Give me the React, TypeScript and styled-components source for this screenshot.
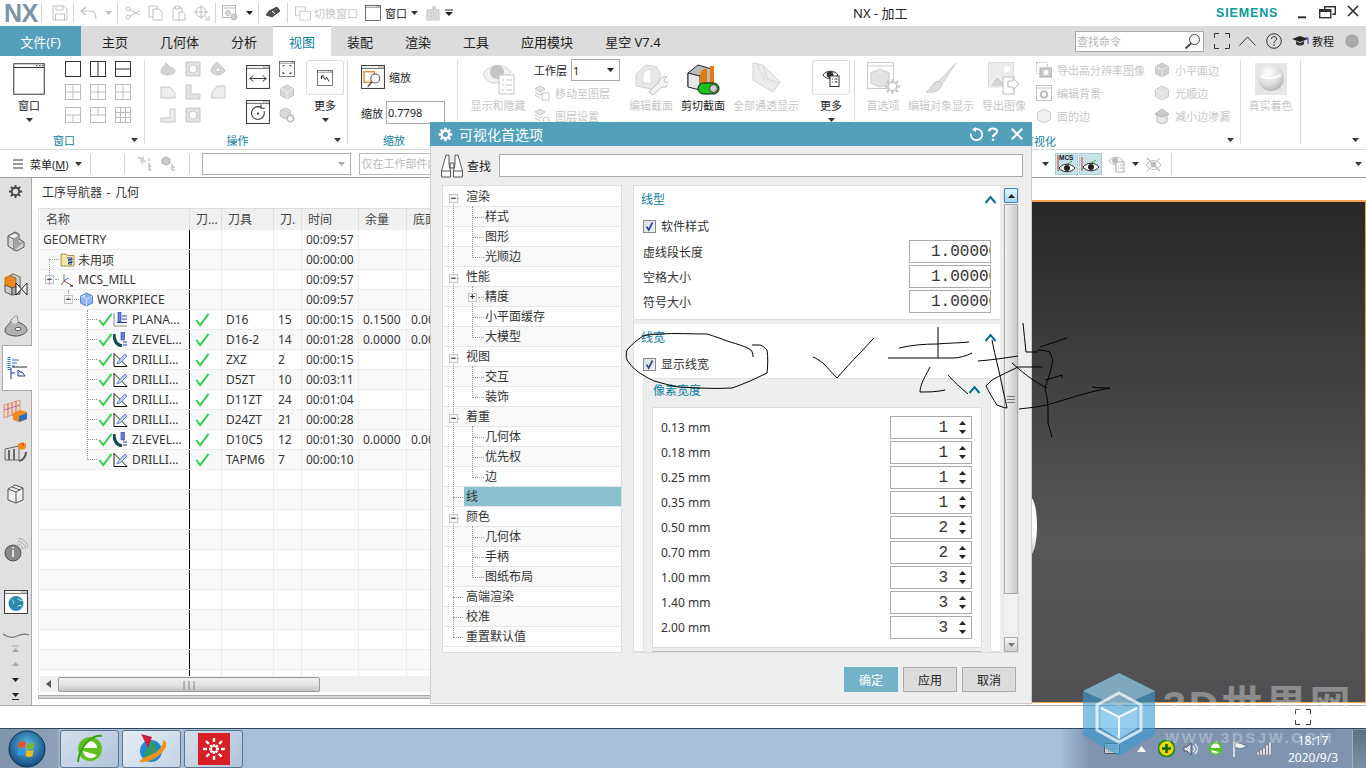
import React from "react";
import styled, { createGlobalStyle } from "styled-components";

const Global = createGlobalStyle`
  html, body { margin: 0; padding: 0; width: 1366px; height: 768px; overflow: hidden; background: #fff; }
  * { box-sizing: border-box; }
  body { font-family: "Noto Sans", "Noto Sans CJK SC", sans-serif; font-size: 12px; color: #333; }
  svg { display: block; flex: none; }
`;

const Page = styled.div`position: relative; width: 1366px; height: 768px; overflow: hidden; display: flex; flex-direction: column;`;

/* ---------- title bar ---------- */
const TitleBar = styled.div`height: 26px; display: flex; align-items: center; background: #fff; position: relative; font-size: 11px;`;
const Logo = styled.div`font: bold 25px "Liberation Sans", sans-serif; color: #7d93a9; width: 37px; margin-left: 4px; letter-spacing: -0.5px;`;
const Slot = styled.div<{ $w?: number; $ml?: number }>`
  display: flex; align-items: center; justify-content: center; flex: none;
  width: ${p => (p.$w ? `${p.$w}px` : "auto")}; margin-left: ${p => p.$ml ?? 0}px;
`;
const VSep = styled.div<{ $ml?: number; $h?: number }>`width: 1px; height: ${p => p.$h ?? 20}px; background: #d4d4d4; margin-left: ${p => p.$ml ?? 0}px; flex: none;`;
const DimText = styled.span`color: #c6c6c6; white-space: nowrap;`;
const DarkText = styled.span`color: #222; white-space: nowrap;`;
const AppTitle = styled.div`position: absolute; left: 853px; top: 3px; font-size: 13px; color: #222; white-space: nowrap;`;
const Siemens = styled.div`position: absolute; left: 1216px; top: 6px; font: bold 12.5px "Liberation Sans", sans-serif; color: #0a9b9b; letter-spacing: 0.85px;`;
const WinControls = styled.svg`position: absolute; left: 1296px; top: 5px;`;

/* ---------- tabs ---------- */
const TabBar = styled.div`height: 30px; background: #dcdcdc; display: flex; align-items: stretch; position: relative;`;
const FileTab = styled.div`width: 81px; margin-right: 5px; background: #53a0ba; color: #fff; font-size: 13px; display: flex; align-items: center; justify-content: center;`;
const Tab = styled.div<{ $active?: boolean }>`
  padding: 0 16px; font-size: 13px; display: flex; align-items: center; white-space: nowrap;
  color: ${p => (p.$active ? "#0b7ea4" : "#222")}; background: ${p => (p.$active ? "#fff" : "transparent")};
  ${p => p.$active && "border-top: 1px solid #aaa;"}
`;
const TabRight = styled.div`position: absolute; left: 1075px; top: 5px; height: 20px; display: flex; align-items: center; font-size: 11px;`;
const CmdSearch = styled.div`width: 129px; height: 21px; background: #fff; border: 1px solid #aaa; display: flex; align-items: center; justify-content: space-between; padding: 0 2px 0 1px; color: #b4b4b4;`;

/* ---------- ribbon ---------- */
const Ribbon = styled.div`height: 94px; display: flex; border-bottom: 1px solid #ddd; background: #fff; font-size: 11px;`;
const Group = styled.div<{ $w?: number; $bar?: boolean }>`
  position: relative; flex: ${p => (p.$w ? "none" : "1")}; width: ${p => (p.$w ? `${p.$w}px` : "auto")}; padding-top: 4px; display: flex; flex-direction: column;
  ${p => p.$bar && `&::after { content: ""; position: absolute; right: 0; top: 4px; bottom: 5px; width: 1px; background: #dcdcdc; }`}
`;
const GroupBody = styled.div`height: 70px; display: flex; align-items: flex-start;`;
const GroupLabel = styled.div<{ $pr?: number; $end?: boolean }>`
  height: 20px; padding-top: 2px; display: flex; align-items: center; justify-content: ${p => (p.$end ? "flex-end" : "center")};
  color: #0b7ea4; padding-right: ${p => p.$pr ?? 0}px;
`;
const GroupCaret = styled.div`position: absolute; right: 7px; bottom: 7px;`;
const Big = styled.div<{ $w: number; $ml?: number; $dim?: boolean }>`
  width: ${p => p.$w}px; margin-left: ${p => p.$ml ?? 0}px; flex: none; display: flex; flex-direction: column; align-items: center;
  color: ${p => (p.$dim ? "#c6c6c6" : "#222")};
`;
const BigIcon = styled.div`height: 37px; display: flex; align-items: center; justify-content: center;`;
const BigLabel = styled.div`height: 17px; line-height: 17px; white-space: nowrap;`;
const BigCaret = styled.div`height: 12px; display: flex; align-items: center;`;
const MoreBox = styled.div`width: 38px; height: 35px; margin-bottom: 2px; border: 1px solid #dcdcdc; border-radius: 3px; display: flex; align-items: center; justify-content: center;`;
const IconGrid = styled.div<{ $ml: number }>`
  margin-left: ${p => p.$ml}px; margin-top: 1px; display: grid; grid-template-columns: repeat(3, 16px); grid-auto-rows: 16px; column-gap: 9px; row-gap: 7px; flex: none;
`;
const Stack = styled.div<{ $ml?: number; $w?: number; $pt?: number; $gap?: number; $mt?: number }>`
  margin-left: ${p => p.$ml ?? 0}px; margin-top: ${p => p.$mt ?? 0}px; padding-top: ${p => p.$pt ?? 0}px; width: ${p => (p.$w ? `${p.$w}px` : "auto")};
  display: flex; flex-direction: column; gap: ${p => p.$gap ?? 0}px; flex: none;
`;
const InRow = styled.div<{ $gap?: number; $h?: number }>`display: flex; align-items: center; gap: ${p => p.$gap ?? 4}px; height: ${p => (p.$h ? `${p.$h}px` : "auto")}; white-space: nowrap;`;
const ZoomInput = styled.div`width: 59px; height: 23px; border: 1px solid #aaa; padding-left: 1px; line-height: 21px; color: #222; background: #fff;`;
const LayerSelect = styled.div`width: 49px; height: 22px; border: 1px solid #aaa; display: flex; align-items: center; justify-content: space-between; padding: 0 5px 0 1px; color: #222;`;
const RibbonDivider = styled.div<{ $ml: number }>`width: 1px; height: 86px; background: #dcdcdc; margin-left: ${p => p.$ml}px; flex: none;`;

/* ---------- toolbar ---------- */
const Toolbar = styled.div`height: 28px; display: flex; align-items: center; border-bottom: 1px solid #9aa0a6; background: #fff; position: relative; font-size: 11px;`;
const SelectBox = styled.div<{ $w: number; $ml: number }>`
  width: ${p => p.$w}px; margin-left: ${p => p.$ml}px; height: 22px; border: 1px solid #aaa; flex: none; display: flex; align-items: center; justify-content: flex-end; padding-right: 5px; background: #fff;
`;
const FilterBox = styled.div<{ $ml: number }>`margin-left: ${p => p.$ml}px; width: 100px; height: 22px; border: 1px solid #bbb; color: #b8b8b8; padding-left: 2px; line-height: 20px; white-space: nowrap; overflow: hidden; flex: none;`;
const ToolRight = styled.div`position: absolute; left: 1040px; right: 0; top: 3px; height: 22px; display: flex; align-items: center;`;
const ToggleBtn = styled.div<{ $ml?: number }>`width: 23px; height: 22px; background: #c7e1e8; border: 1px solid #a9cfd9; margin-left: ${p => p.$ml ?? 0}px; flex: none; display: flex; align-items: center; justify-content: center;`;

/* ---------- main ---------- */
const Main = styled.div`height: 528px; display: flex; background: #fff; border-bottom: 1px solid #aaa;`;
const Rail = styled.div`width: 32px; background: #e0e0e0; border-right: 1px solid #aaa; display: flex; flex-direction: column; flex: none; position: relative;`;
const RailItem = styled.div<{ $h: number; $active?: boolean; $end?: boolean }>`
  height: ${p => p.$h}px; display: flex; justify-content: center; align-items: ${p => (p.$end ? "flex-end" : "center")}; flex: none;
  ${p => p.$active && `background: #fff; border: 1px solid #aaa; border-right: 0; margin: 0 -1px 0 2px;`}
`;
const NavPane = styled.div`width: 996px; flex: none; display: flex; flex-direction: column; position: relative;`;
const NavTitle = styled.div`height: 30px; padding: 3px 0 0 10px; line-height: 24px; color: #333; white-space: nowrap; word-spacing: 1.5px;`;
const TableWrap = styled.div`margin-left: 6px; border: 1px solid #ddd; border-width: 1px 0 0 1px; padding-left: 1px; display: flex; flex-direction: column;`;
const TableHead = styled.div`height: 21px; display: grid; grid-template-columns: 150px 32px 52px 28px 57px 48px 1fr; background: #f0f0f0; flex: none;`;
const HeadCell = styled.div`border-right: 1px solid #ddd; padding-left: 6px; line-height: 21px; color: #444; white-space: nowrap; overflow: hidden;`;
const RowsArea = styled.div`height: 446px; overflow: hidden; position: relative; flex: none;`;
const Row = styled.div<{ $alt: boolean }>`
  height: 20px; display: grid; grid-template-columns: 150px 32px 52px 28px 57px 48px 1fr;
  background: ${p => (p.$alt ? "#f9f9f9" : "#fff")}; border-bottom: 1px solid #ececec;
`;
const NameCell = styled.div<{ $pl: number }>`border-right: 1px solid #000; padding-left: ${p => p.$pl}px; display: flex; align-items: center; white-space: nowrap; overflow: hidden; color: #333;`;
const Cell = styled.div<{ $pl?: number }>`border-right: 1px solid #ececec; padding-left: ${p => p.$pl ?? 4}px; display: flex; align-items: center; white-space: nowrap; overflow: hidden; color: #333; line-height: 19px;`;
const Guide = styled.div<{ $x: number; $y: number; $h?: number; $w?: number }>`
  position: absolute; left: ${p => p.$x}px; top: ${p => p.$y}px;
  ${p => (p.$h ? `height: ${p.$h}px; border-left: 1px dotted #999;` : `width: ${p.$w}px; border-top: 1px dotted #999;`)}
`;
const Expander = styled.div`width: 9px; height: 9px; border: 1px solid #c4c4c4; background: #f8f8f8; display: flex; align-items: center; justify-content: center; flex: none; font: 700 9px/7px "Liberation Sans", sans-serif; color: #222;`;
const HScroll = styled.div`height: 16px; display: flex; align-items: center; background: #f0f0f0; flex: none; padding-left: 6px;`;
const HThumb = styled.div`width: 262px; height: 15px; margin-left: 7px; border: 1px solid #999; border-radius: 2px; background: linear-gradient(#f0f0f0, #e4e4e4 50%, #c4c4c4); display: flex; align-items: center; justify-content: center; color: #555; font-size: 9px;`;
const HSash = styled.div`height: 4px; margin: 3px 0 0 6px; background: #d4d4d4; border: 1px solid #aaa;`;
const Sash = styled.div`width: 2px; background: #e6e6e6; flex: none;`;
const ViewCol = styled.div`flex: 1; display: flex; flex-direction: column; min-width: 0;`;
const ViewTop = styled.div`height: 22px; flex: none;`;
const Viewport = styled.div`
  height: 503px; flex: none; position: relative; overflow: hidden; border: 2px solid #f3a24f; border-width: 2px 1px 1px 0;
  background: linear-gradient(#272727, #3d3d3f 30%, #58585a 68%, #505052);
`;
const Sphere = styled.div`position: absolute; left: 0; top: 295px; width: 7px; height: 58px; border-radius: 0 100% 100% 0 / 0 50% 50% 0; background: linear-gradient(#fff 65%, #b8c9c6);`;

/* ---------- status + taskbar ---------- */
const StatusBar = styled.div`height: 22px; background: #fff; display: flex; align-items: center; padding-left: 1295px; flex: none;`;
const Taskbar = styled.div`height: 40px; flex: none; border-top: 1px solid #33475a; background: linear-gradient(90deg, #7f93aa 0, #8ea3bb 58px, #a6bfda 60px, #a6bfda 1060px, #7e94b1 1090px); display: flex; align-items: center; position: relative;`;
const TaskBtn = styled.div<{ $first?: boolean; $lit?: boolean }>`
  width: 59px; height: 38px; margin-left: ${p => (p.$first ? "14px" : "3px")}; flex: none; border: 1px solid #5d7690; border-radius: 3px;
  background: ${p => (p.$lit ? "linear-gradient(135deg,#e6eef6,#c2d3e5)" : "linear-gradient(135deg,#d4e0ec,#afc4da)")}; display: flex; align-items: center; justify-content: center;
`;
const Tray = styled.div`position: absolute; left: 1104px; top: 0; bottom: 0; display: flex; align-items: center;`;
const Clock = styled.div`position: absolute; left: 1283px; width: 60px; top: 3px; color: #fff; text-align: center; line-height: 17px;`;
const ShowDesk = styled.div`position: absolute; right: 0; top: 1px; bottom: 0; width: 14px; background: linear-gradient(#5c7084, #7d90a6); border-left: 1px solid #9db0c4;`;

/* ---------- dialog ---------- */
const Dialog = styled.div`position: absolute; left: 430px; top: 122px; width: 602px; height: 582px; background: #eee; border: 1px solid #ccc; border-top: 0; display: flex; flex-direction: column;`;
const DlgTitle = styled.div`height: 24px; margin: 0 -1px; background: #53a0ba; color: #fff; display: flex; align-items: center; font-size: 14px; flex: none;`;
const DlgSearch = styled.div`height: 39px; display: flex; align-items: center; flex: none;`;
const DlgInput = styled.div`margin-left: 8px; width: 524px; height: 23px; background: #fff; border: 1px solid #aaa;`;
const DlgBody = styled.div`height: 468px; flex: none; display: flex; padding-left: 11px; gap: 11px;`;
const TreePanel = styled.div`width: 180px; background: #fff; border: 1px solid #ddd; padding: 1px 0 0 1px; position: relative; flex: none; overflow: hidden;`;
const TreeRow = styled.div<{ $alt: boolean }>`height: 20px; background: ${p => (p.$alt ? "#f9f9f9" : "#fff")}; border-bottom: 1px solid #e6e6e6;`;
const TreeText = styled.div<{ $pl: number; $sel?: boolean }>`
  height: 19px; line-height: 19px; margin-left: ${p => p.$pl - 2}px; padding-left: 2px; color: #333; white-space: nowrap;
  ${p => p.$sel && "background: #8bc0d0; margin-top: 0;"}
`;
const TreeExp = styled(Expander)<{ $x: number; $y: number }>`position: absolute; left: ${p => p.$x}px; top: ${p => p.$y}px;`;
const RightPanel = styled.div`width: 386px; background: #eee; border: 1px solid #ddd; display: flex; flex: none; overflow: hidden;`;
const RightScrollArea = styled.div`width: 366px; flex: none; display: flex; flex-direction: column; gap: 4px;`;
const Section = styled.div<{ $h?: number }>`background: #fff; ${p => (p.$h ? `height: ${p.$h}px; flex: none;` : "flex: 1;")} border-bottom: 1px solid #dcdcdc; min-height: 0;`;
const SecHead = styled.div`height: 26px; display: flex; align-items: center; justify-content: space-between; padding: 0 3px 0 7px; color: #0b7ea4;`;
const CheckRow = styled.div`height: 28px; display: flex; align-items: center; gap: 5px; padding-left: 9px; color: #333;`;
const CheckBox = styled.div`width: 13px; height: 13px; border: 1px solid #8a8a8a; background: linear-gradient(135deg, #dfe1ea, #eef0f6); display: flex; align-items: center; justify-content: center; flex: none;`;
const FieldRow = styled.div<{ $pl?: number; $pr?: number }>`height: 25px; display: flex; align-items: center; justify-content: space-between; padding: 0 ${p => p.$pr ?? 9}px 2px ${p => p.$pl ?? 9}px; color: #333; white-space: nowrap;`;
const NumBox = styled.div`width: 82px; height: 23px; border: 1px solid #aaa; background: #fff; padding-left: 21px; font: 16px/22px "Liberation Mono", monospace; color: #333; overflow: hidden; white-space: nowrap; flex: none;`;
const SpinBox = styled.div`width: 82px; height: 23px; border: 1px solid #aaa; background: #fff; display: flex; align-items: center; justify-content: flex-end; font: 16px "Liberation Mono", monospace; color: #333; gap: 11px; padding-right: 5px; flex: none;`;
const SpinArrows = styled.div`display: flex; flex-direction: column; gap: 5px;`;
const SubGroup = styled.div`margin: 0 9px; background: #eee; height: 276px; border: 1px solid #e2e2e2; border-bottom: 0; padding: 0 8px;`;
const SubHead = styled.div`height: 28px; display: flex; align-items: center; justify-content: space-between; padding: 0 1px 7px; color: #0b7ea4;`;
const SubInner = styled.div`height: 241px; background: #fff; border: 1px solid #ddd; padding-top: 8px;`;
const SubNext = styled.div`height: 6px; margin-top: 3px; background: #e4e4e4; border: 1px solid #bbb;`;
const VScroll = styled.div`width: 15px; margin-left: 3px; flex: none; background: #f1f1f1; display: flex; flex-direction: column; padding-top: 2px; border-left: 1px solid #e4e4e4;`;
const VBtn = styled.div<{ $lit?: boolean }>`height: 15px; width: 14px; border: 1px solid ${p => (p.$lit ? "#3d85ad" : "#aaa")}; background: ${p => (p.$lit ? "linear-gradient(#e4f3fc,#a9d4ef)" : "linear-gradient(#f6f6f6,#cfcfcf)")}; border-radius: 1px; display: flex; align-items: center; justify-content: center; flex: none;`;
const VThumb = styled.div`height: 390px; width: 14px; margin-top: 1px; border: 1px solid #aaa; background: linear-gradient(90deg, #f2f2f2, #cacaca); display: flex; align-items: center; justify-content: center; flex: none;`;
const VGap = styled.div`flex: 1;`;
const DlgFooter = styled.div`height: 51px; display: flex; justify-content: flex-end; align-items: flex-start; gap: 5px; padding: 14px 15px 0 0; flex: none;`;
const DlgBtn = styled.div<{ $primary?: boolean }>`
  width: 54px; height: 25px; display: flex; align-items: center; justify-content: center;
  background: ${p => (p.$primary ? "#72b3c9" : "#dcdcdc")}; color: ${p => (p.$primary ? "#fff" : "#222")}; border: 1px solid ${p => (p.$primary ? "#72b3c9" : "#aaa")};
`;

/* ---------- overlays ---------- */
const Sketch = styled.svg`position: absolute; left: 0; top: 0; pointer-events: none;`;
const Mark = styled.div`position: absolute; left: 1083px; top: 673px; pointer-events: none;`;
const MarkTitle = styled.div`position: absolute; left: 1163px; top: 672px; font: bold 41px "Liberation Sans", "Noto Sans CJK SC", sans-serif; color: rgba(255,255,255,.36); letter-spacing: 3px; white-space: nowrap; pointer-events: none;`;
const MarkUrl = styled.div`position: absolute; left: 1165px; top: 729px; font: bold 15px "Liberation Sans", sans-serif; color: rgba(255,255,255,.3); letter-spacing: 2.55px; white-space: nowrap; pointer-events: none;`;

/* ---------- icon helpers ---------- */
const Caret = ({ c = "#333", w = 7 }: { c?: string; w?: number }) => (
  <svg width={w} height={4} viewBox="0 0 7 4"><path d="M0 0h7L3.5 4z" fill={c} /></svg>
);
const UpArrow = ({ c = "#333" }: { c?: string }) => (
  <svg width={7} height={4} viewBox="0 0 7 4"><path d="M0 4h7L3.5 0z" fill={c} /></svg>
);
const Chevron = () => (
  <svg width={13} height={9} viewBox="0 0 13 9"><path d="M1.5 8L6.5 2l5 6" fill="none" stroke="#0a6f8e" strokeWidth="2" /></svg>
);
const Win = ({ s, c = "#333", children }: { s: number; c?: string; children?: React.ReactNode }) => (
  <svg width={s} height={s} viewBox="0 0 32 32">
    <rect x=".75" y=".75" width="30.5" height="30.5" fill="#fff" stroke={c} strokeWidth={s < 26 ? 1.3 : 1} />
    <path d="M1 4.5h30" stroke={c} strokeWidth="1" />
    <path d="M23 2.6h1.6M26 2.6h1.6M29 2.6h1.4" stroke={c} strokeWidth="1" />
    {children}
  </svg>
);
const Pane = ({ d, c = "#bbb" }: { d: string; c?: string }) => (
  <svg width={16} height={16} viewBox="0 0 16 16"><rect x=".5" y=".5" width="15" height="15" fill="none" stroke={c} /><path d={d} stroke={c} fill="none" /></svg>
);
const GrayShape = ({ d, s = 16, f = "#e2e2e2" }: { d: string; s?: number; f?: string }) => (
  <svg width={s} height={s} viewBox="0 0 16 16"><path d={d} fill={f} stroke="#bdbdbd" strokeWidth=".8" fillRule="evenodd" /></svg>
);
const Cube = ({ s = 16, c = "#d8d8d8" }: { s?: number; c?: string }) => (
  <svg width={s} height={s} viewBox="0 0 16 16">
    <path d="M8 1l6.5 3.5v7L8 15l-6.5-3.5v-7z" fill={c} stroke="#bdbdbd" strokeWidth=".8" />
    <path d="M1.500 4.500L8 8l6.500-3.500M8 8v7" fill="none" stroke="#f2f2f2" strokeWidth=".8" />
  </svg>
);
const Gear = ({ s = 14, c = "#b9b9b9" }: { s?: number; c?: string }) => (
  <svg width={s} height={s} viewBox="0 0 16 16">
    <path d="M8 1v2.4M8 12.6V15M1 8h2.4M12.6 8H15M3 3l1.7 1.7M11.3 11.3L13 13M13 3l-1.7 1.7M4.7 11.3L3 13" stroke={c} strokeWidth="2" />
    <circle cx="8" cy="8" r="4" fill="none" stroke={c} strokeWidth="2" />
  </svg>
);
const Check = ({ s = 16 }: { s?: number }) => (
  <svg width={s} height={s} viewBox="0 0 16 16"><path d="M1.500 8.500l4 5.500L14.500 2" fill="none" stroke="#2bd14a" strokeWidth="2" /></svg>
);
const DrillIcon = () => (
  <svg width={15} height={15} viewBox="0 0 15 15">
    <path d="M1 14.500h13L1 1.500z" fill="#fff" stroke="#111" strokeWidth="1" />
    <path d="M5 9.500L12 2l2 2-7 7-3 .8z" fill="#c8d4f4" stroke="#4a62c8" strokeWidth=".8" />
  </svg>
);
const PlanarIcon = () => (
  <svg width={15} height={15} viewBox="0 0 15 15">
    <path d="M1 1v13h13" fill="none" stroke="#888" />
    <path d="M4 10.500h10M9 7h5M9 4h5" stroke="#2438b8" strokeWidth="1" />
    <rect x="5" y="0" width="3" height="10" fill="#6c7fd8" stroke="#2438b8" strokeWidth=".6" />
  </svg>
);
const ZLevelIcon = () => (
  <svg width={15} height={15} viewBox="0 0 15 15">
    <path d="M1 2c0 7 3 11 8 12" fill="none" stroke="#134a5a" strokeWidth="3" />
    <rect x="8" y="0" width="3.500" height="8" fill="#6c7fd8" stroke="#2438b8" strokeWidth=".6" />
    <path d="M10 10h4M10 13h4" stroke="#2438b8" />
  </svg>
);
const Folder = () => (
  <svg width={15} height={15} viewBox="0 0 15 15">
    <path d="M1 2h5l1 1.500h7V14H1z" fill="#f5e6a8" stroke="#8a7a30" strokeWidth=".8" />
    <path d="M7 6h5v1.500H8.500V9H12v1.500H8.500V12H12" fill="none" stroke="#1c3fb8" strokeWidth="1" />
  </svg>
);
const McsIcon = () => (
  <svg width={15} height={15} viewBox="0 0 15 15">
    <path d="M4 9V2" stroke="#3aa53a" /><path d="M4 9l4-3" stroke="#2c57c5" /><path d="M4 9l9 5" stroke="#d83a3a" /><path d="M4 9L1 13" stroke="#d83a3a" />
    <path d="M10 13l3 2M13 13l-3 2" stroke="#333" strokeWidth=".7" />
  </svg>
);
const PieceIcon = () => (
  <svg width={15} height={15} viewBox="0 0 15 15">
    <path d="M7.500 1l6 3v7l-6 3-6-3V4z" fill="#8fb3ee" stroke="#4468c0" strokeWidth=".8" />
    <path d="M1.500 4l6 3 6-3M7.500 7v7" fill="none" stroke="#dbe7fb" strokeWidth=".8" />
    <circle cx="5" cy="4" r="1.200" fill="#dbe7fb" />
  </svg>
);
const Bino = () => (
  <svg width={24} height={24} viewBox="0 0 24 24" fill="none" stroke="#555" strokeWidth="1">
    <path d="M6 1h3v9l1.500 7v6h-9v-6L3.500 10z" fill="#fff" />
    <path d="M15 1h3l2.500 9 2 7v6h-9v-6l1.500-7z" fill="#fff" />
    <path d="M1.500 17h9M13.500 17h9M10 9h4v5h-4z" />
  </svg>
);
const TickBlue = () => (
  <svg width={11} height={11} viewBox="0 0 11 11"><path d="M2.500 5.500l2.200 3.500L8.500 1.500" fill="none" stroke="#33479c" strokeWidth="1.700" /></svg>
);
const WhiteGear = () => (
  <svg width={15} height={15} viewBox="0 0 16 16">
    <path d="M8 .8v3M8 12.200v3M.8 8h3M12.200 8h3M2.900 2.900L5 5M11 11l2.100 2.100M13.100 2.900L11 5M5 11l-2.100 2.100" stroke="#fff" strokeWidth="2.600" />
    <circle cx="8" cy="8" r="4" fill="none" stroke="#fff" strokeWidth="2.600" />
  </svg>
);

/* ---------- data ---------- */
type Op = { kind: string; name: string; tool?: string; no?: string; time: string; st?: string; fl?: string };
const ops: Op[] = [
  { kind: "root", name: "GEOMETRY", time: "00:09:57" },
  { kind: "unused", name: "未用项", time: "00:00:00" },
  { kind: "mcs", name: "MCS_MILL", time: "00:09:57" },
  { kind: "wp", name: "WORKPIECE", time: "00:09:57" },
  { kind: "planar", name: "PLANA...", tool: "D16", no: "15", time: "00:00:15", st: "0.1500", fl: "0.00" },
  { kind: "z", name: "ZLEVEL...", tool: "D16-2", no: "14", time: "00:01:28", st: "0.0000", fl: "0.00" },
  { kind: "drill", name: "DRILLI...", tool: "ZXZ", no: "2", time: "00:00:15" },
  { kind: "drill", name: "DRILLI...", tool: "D5ZT", no: "10", time: "00:03:11" },
  { kind: "drill", name: "DRILLI...", tool: "D11ZT", no: "24", time: "00:01:04" },
  { kind: "drill", name: "DRILLI...", tool: "D24ZT", no: "21", time: "00:00:28" },
  { kind: "z", name: "ZLEVEL...", tool: "D10C5", no: "12", time: "00:01:30", st: "0.0000", fl: "0.00" },
  { kind: "drill", name: "DRILLI...", tool: "TAPM6", no: "7", time: "00:00:10" },
];
const allRows: (Op | null)[] = [...ops, ...Array.from({ length: 11 }, () => null)];

const tree: { t: string; l: number; sel?: boolean }[] = [
  { t: "渲染", l: 0 }, { t: "样式", l: 1 }, { t: "图形", l: 1 }, { t: "光顺边", l: 1 },
  { t: "性能", l: 0 }, { t: "精度", l: 1 }, { t: "小平面缓存", l: 1 }, { t: "大模型", l: 1 },
  { t: "视图", l: 0 }, { t: "交互", l: 1 }, { t: "装饰", l: 1 },
  { t: "着重", l: 0 }, { t: "几何体", l: 1 }, { t: "优先权", l: 1 }, { t: "边", l: 1 },
  { t: "线", l: 0, sel: true },
  { t: "颜色", l: 0 }, { t: "几何体", l: 1 }, { t: "手柄", l: 1 }, { t: "图纸布局", l: 1 },
  { t: "高端渲染", l: 0 }, { t: "校准", l: 0 }, { t: "重置默认值", l: 0 },
];
const widths: [string, string][] = [
  ["0.13 mm", "1"], ["0.18 mm", "1"], ["0.25 mm", "1"], ["0.35 mm", "1"], ["0.50 mm", "2"],
  ["0.70 mm", "2"], ["1.00 mm", "3"], ["1.40 mm", "3"], ["2.00 mm", "3"],
];

const sketchPaths = [
  "M753 357c0-3-1-6-2-7-6-4-14-6-21-8-8-3-16-6-23-8-15 0-32-1-47 0-6 0-12 1-17 2-6 4-12 9-16 14-1 3-1 7 0 10 3 4 6 8 10 11 5 4 11 7 17 10 8 2 17 5 25 6 18 1 36 2 53 1 12-4 25-10 35-15 1-8 1-16 0-23-2-2-4-4-7-5h-8",
  "M813 357c3 1 7 4 10 6 5 5 9 10 14 15 7-8 15-17 23-25 5-5 9-10 14-15",
  "M899 348c13-3 25-4 38-4 11-1 22-1 32-2",
  "M938 327v31",
  "M888 358h65c6 0 13-2 19-5",
  "M930 367c-3 6-6 11-8 16-1 3-2 6-2 9 8 0 17 0 25-2",
  "M948 375c6 7 13 13 20 19",
  "M978 361c13-1 27-3 40-5",
  "M992 340c3 17 8 33 11 50 1 6 3 12 4 18-3 0-7-2-10-3-4-6-8-13-11-19 2-2 4-4 6-6 9-5 18-9 26-13h24",
  "M1012 363c7 6 14 12 21 17 5 3 9 6 14 8",
  "M1023 323c1 10 2 19 3 29h12",
  "M1040 347c9-3 18-6 27-9",
  "M1038 350c4 0 8 1 12 2 1 3 2 6 3 8-1 4-2 9-3 13-2 5-3 10-5 15",
  "M1045 380c5-1 11-3 17-5v3",
  "M1019 409c9-1 19-2 28-4 11-3 22-7 33-10 10-3 20-5 30-7-6 0-12 0-18-1",
  "M1045 388c1 6 3 12 3 18 0 6 0 11 0 17 1 5 3 9 4 14",
];

const Row1 = ({ r, i }: { r: Op | null; i: number }) => {
  const alt = i % 2 === 1;
  if (!r) return <Row $alt={alt}><NameCell $pl={0} /><Cell /><Cell /><Cell /><Cell /><Cell /><Cell /></Row>;
  const isOp = !["root", "unused", "mcs", "wp"].includes(r.kind);
  const pl = r.kind === "root" ? 3 : r.kind === "unused" ? 20 : r.kind === "mcs" ? 5 : r.kind === "wp" ? 24 : 58;
  return (
    <Row $alt={alt}>
      <NameCell $pl={pl}>
        {r.kind === "mcs" && <><Expander>−</Expander><Slot $w={15} $ml={6}><McsIcon /></Slot><Slot $ml={3}>{r.name}</Slot></>}
        {r.kind === "wp" && <><Expander>−</Expander><Slot $w={15} $ml={6}><PieceIcon /></Slot><Slot $ml={3}>{r.name}</Slot></>}
        {r.kind === "unused" && <><Slot $w={15}><Folder /></Slot><Slot $ml={3}>{r.name}</Slot></>}
        {r.kind === "root" && r.name}
        {isOp && <>
          <Check s={15} />
          <Slot $w={15}>{r.kind === "drill" ? <DrillIcon /> : r.kind === "z" ? <ZLevelIcon /> : <PlanarIcon />}</Slot>
          <Slot $ml={4}>{r.name}</Slot>
        </>}
      </NameCell>
      <Cell $pl={5}>{isOp && <Check s={15} />}</Cell>
      <Cell>{r.tool}</Cell>
      <Cell>{r.no}</Cell>
      <Cell>{r.time}</Cell>
      <Cell>{r.st}</Cell>
      <Cell>{r.fl}</Cell>
    </Row>
  );
};

export default function App() {
  const paneD = ["", "M8 .5v15", "M.5 8h15", "M8 .5v15M.5 8h15", "M8 .5v15M.5 8h15", "M8 .5v15M.5 8h15", "M.5 8h15M8 8v7.5", "M.5 8h15M8 .5V8", "M5.5 .5v15M10.5 .5v15M.5 5.5h15M.5 10.5h15"];
  return (
    <Page>
      <Global />
      <TitleBar>
        <Logo>NX</Logo>
        <VSep />
        <Slot $w={16} $ml={10}>
          <svg width={16} height={16} viewBox="0 0 16 16" fill="none" stroke="#c0c0c0"><path d="M1 1h11l3 3v11H1z" /><path d="M4 1v4h7V1M3.500 15V9h9v6" /></svg>
        </Slot>
        <VSep $ml={5} />
        <Slot $w={17} $ml={6}>
          <svg width={17} height={14} viewBox="0 0 17 14" fill="none" stroke="#c0c0c0" strokeWidth="1.200"><path d="M6 1L1 5l5 4M1 5h10c4 0 5 3 5 8" /></svg>
        </Slot>
        <Slot $w={8} $ml={7}><Caret c="#c0c0c0" /></Slot>
        <VSep $ml={5} />
        <Slot $w={16} $ml={7}>
          <svg width={16} height={16} viewBox="0 0 16 16" fill="none" stroke="#c0c0c0"><circle cx="3" cy="4" r="2" /><circle cx="3" cy="12" r="2" /><path d="M5 5l10 5M5 11l10-5" /></svg>
        </Slot>
        <Slot $w={16} $ml={7}>
          <svg width={16} height={16} viewBox="0 0 16 16" fill="#fff" stroke="#c0c0c0"><path d="M1 1h8v11H1z" /><path d="M5 4h6l3 3v8H5z" /></svg>
        </Slot>
        <Slot $w={16} $ml={7}>
          <svg width={16} height={16} viewBox="0 0 16 16" fill="#fff" stroke="#c0c0c0"><path d="M2 3h9v12H2z" /><path d="M4.500 1h4v3h-4zM8 7h4l2 2v6H8z" /></svg>
        </Slot>
        <Slot $w={16} $ml={7}>
          <svg width={16} height={16} viewBox="0 0 16 16" fill="none" stroke="#c0c0c0"><circle cx="7" cy="7" r="5" /><path d="M7 0v14M0 7h14M10 10l5 5M15 11v4h-4" /></svg>
        </Slot>
        <VSep $ml={5} />
        <Slot $w={16} $ml={6}>
          <svg width={16} height={16} viewBox="0 0 16 16" fill="none" stroke="#bbb"><rect x=".5" y=".5" width="13" height="12" /><path d="M.5 3h13" /><circle cx="6" cy="8" r="2.500" fill="#ddd" /><circle cx="12" cy="12" r="3" fill="#ccc" /></svg>
        </Slot>
        <Slot $w={8} $ml={7}><Caret c="#222" /></Slot>
        <VSep $ml={5} />
        <Slot $w={16} $ml={6}>
          <svg width={16} height={14} viewBox="0 0 16 14"><path d="M1 9l3-4 8-4 3 4-8 6z" fill="#555" stroke="#222" strokeWidth=".7" /><path d="M7 5l3 3" stroke="#fff" /></svg>
        </Slot>
        <VSep $ml={6} />
        <Slot $w={16} $ml={7}>
          <svg width={16} height={15} viewBox="0 0 18 16" fill="#fff" stroke="#c6c6c6"><rect x=".5" y=".5" width="11" height="10" /><rect x="5.500" y="5.500" width="12" height="10" /></svg>
        </Slot>
        <Slot $ml={3}><DimText>切换窗口</DimText></Slot>
        <Slot $w={16} $ml={7}><Win s={16} c="#222" /></Slot>
        <Slot $ml={4}><DarkText>窗口</DarkText></Slot>
        <Slot $w={8} $ml={3}><Caret /></Slot>
        <Slot $w={15} $ml={8}>
          <svg width={15} height={16} viewBox="0 0 15 16"><rect x="1" y="5" width="12" height="10" fill="#ddd" stroke="#c4c4c4" /><path d="M3 8h8M3 11h8" stroke="#bbb" strokeDasharray="1 1" /><circle cx="8" cy="3" r="2" fill="#e0c8c8" /></svg>
        </Slot>
        <Slot $w={9} $ml={3}>
          <svg width={8} height={8} viewBox="0 0 8 8"><path d="M0 1h8" stroke="#222" /><path d="M0 3h8L4 7z" fill="#222" /></svg>
        </Slot>
        <AppTitle>NX - 加工</AppTitle>
        <Siemens>SIEMENS</Siemens>
        <WinControls width={70} height={16} viewBox="0 0 70 16" fill="none" stroke="#333" strokeWidth="1.400">
          <path d="M2 12.300h8" strokeWidth="2" />
          <path d="M28.700 4.500V1.700h10.600v7.500h-3" />
          <rect x="23.700" y="4.700" width="11" height="8" />
          <path d="M23.700 6h11" strokeWidth="2" />
          <path d="M52 1l10 10M62 1L52 11" strokeWidth="1.700" />
        </WinControls>
      </TitleBar>

      <TabBar>
        <FileTab>文件(F)</FileTab>
        <Tab>主页</Tab><Tab>几何体</Tab><Tab>分析</Tab><Tab $active>视图</Tab><Tab>装配</Tab><Tab>渲染</Tab><Tab>工具</Tab><Tab>应用模块</Tab><Tab>星空 V7.4</Tab>
        <TabRight>
          <CmdSearch>
            查找命令
            <svg width={17} height={17} viewBox="0 0 17 17" fill="none" stroke="#444"><circle cx="10.500" cy="6.500" r="5" /><path d="M7 10.500l-5.500 5" strokeWidth="1.800" /></svg>
          </CmdSearch>
          <Slot $w={16} $ml={10}>
            <svg width={16} height={16} viewBox="0 0 16 16" fill="none" stroke="#333"><path d="M.5 5V.5H5M11 .5h4.500V5M15.500 11v4.500H11M5 15.500H.5V11" /></svg>
          </Slot>
          <Slot $w={17} $ml={9}>
            <svg width={17} height={10} viewBox="0 0 17 10" fill="none" stroke="#333"><path d="M.5 9.500L8.500 1l8 8.500" /></svg>
          </Slot>
          <Slot $w={15} $ml={10}>
            <svg width={16} height={16} viewBox="0 0 16 16"><circle cx="8" cy="8" r="7.300" fill="none" stroke="#333" /><path d="M5.500 6c0-3.300 5-3.300 5 0 0 2-2.500 2-2.500 4" fill="none" stroke="#333" /><circle cx="8" cy="12" r=".8" fill="#333" /></svg>
          </Slot>
          <Slot $w={16} $ml={11}>
            <svg width={17} height={12} viewBox="0 0 17 12"><path d="M0 4l8-3 8 3-8 3z" fill="#222" /><path d="M4 6v3c2 2 6 2 8 0V6L8 8z" fill="#333" /><path d="M13 3h3v6" fill="none" stroke="#2233cc" /></svg>
          </Slot>
          <Slot $ml={4}><DarkText>教程</DarkText></Slot>
          <Slot $ml={11}><svg width={14} height={14} viewBox="0 0 14 14"><circle cx="7" cy="7" r="6.800" fill="#aaa" /></svg></Slot>
        </TabRight>
      </TabBar>

      <Ribbon>
        <Group $w={145} $bar>
          <GroupBody>
            <Big $w={58}>
              <BigIcon><Win s={32} /></BigIcon>
              <BigLabel>窗口</BigLabel>
              <BigCaret><Caret /></BigCaret>
            </Big>
            <IconGrid $ml={7}>
              {paneD.map((d, i) => <Pane key={i} d={d} c={i < 3 ? "#333" : "#bbb"} />)}
            </IconGrid>
          </GroupBody>
          <GroupLabel $pr={17}>窗口</GroupLabel>
          <GroupCaret><Caret /></GroupCaret>
        </Group>

        <Group $w={203} $bar>
          <GroupBody>
            <IconGrid $ml={15}>
              <GrayShape d="M1 11c0-4 3-5 5-9 2 2 3 3 4 4 2 1 5 2 5 4 0 2-4 4-7 4s-7-1-7-3z" f="#d4d4d4" />
              <GrayShape d="M1 1h14v14H1zM8 4a4 4 0 100 8 4 4 0 000-8z" />
              <GrayShape d="M1 10c0-3 4-8 6-9l8 8c0 2-4 5-7 5s-7-2-7-4zM6 9a2 2 0 004 0 2 2 0 00-4 0z" f="#d4d4d4" />
              <GrayShape d="M1 3h9l5 6v5H1z" f="#eee" />
              <GrayShape d="M1 1h5v9h9v5H1z" />
              <GrayShape d="M1 14l1-5 5-7h8v12z" f="#eee" />
              <GrayShape d="M1 11h9V2h5v13H1z" f="#eee" />
              <GrayShape d="M1 1h14v14H1zM8 4a4 4 0 100 8 4 4 0 000-8z" />
              <svg width={16} height={16} />
            </IconGrid>
            <Stack $ml={20} $pt={5} $gap={11}>
              <Win s={24}><path d="M5 18h22M5 18l5-4M5 18l5 4M27 18l-5-4M27 18l-5 4" fill="none" stroke="#333" strokeWidth="1.300" /></Win>
              <Win s={24}><path d="M24 15a8.500 8.500 0 11-4-5M20 6v5h5" fill="none" stroke="#333" strokeWidth="1.400" /><circle cx="16" cy="18" r="1.500" fill="#333" /></Win>
            </Stack>
            <Stack $ml={9} $pt={1} $gap={7}>
              <Win s={16} c="#333"><path d="M8 11v-2h3M24 11V9h-3M8 22v3h3M24 22v3h-3" fill="none" stroke="#333" strokeWidth="2" /></Win>
              <Cube />
              <svg width={16} height={16} viewBox="0 0 16 16"><g transform="scale(.8)"><path d="M8 1l6.500 3.500v7L8 15l-6.500-3.500v-7z" fill="#d8d8d8" stroke="#bdbdbd" /></g><g transform="translate(7 7) scale(.55)"><circle cx="8" cy="8" r="6" fill="#fff" stroke="#bbb" strokeWidth="3" /></g></svg>
            </Stack>
            <Big $w={38} $ml={11}>
              <MoreBox>
                <Win s={16}><path d="M9 12l8 7 2-5 5 9M9 12v6M9 12h6" fill="none" stroke="#333" strokeWidth="2" /></Win>
              </MoreBox>
              <BigLabel>更多</BigLabel>
              <BigCaret><Caret /></BigCaret>
            </Big>
          </GroupBody>
          <GroupLabel $pr={18}>操作</GroupLabel>
          <GroupCaret><Caret /></GroupCaret>
        </Group>

        <Group $w={110} $bar>
          <GroupBody>
            <Stack $ml={13} $pt={5} $gap={12}>
              <InRow $h={24} $gap={4}>
                <Win s={24}>
                  <rect x="4" y="9" width="14" height="14" fill="#fff" stroke="#e07b12" strokeWidth="1.600" />
                  <circle cx="19" cy="18" r="6" fill="#fff" stroke="#555" strokeWidth="1.400" />
                  <path d="M15 22l-6 7" stroke="#555" strokeWidth="2" />
                </Win>
                <DarkText>缩放</DarkText>
              </InRow>
              <InRow $h={23} $gap={3}>
                <DarkText>缩放</DarkText>
                <ZoomInput>0.7798</ZoomInput>
              </InRow>
            </Stack>
          </GroupBody>
          <GroupLabel $pr={18}>缩放</GroupLabel>
        </Group>

        <Group $w={783} $bar>
          <GroupBody>
            <Big $w={56} $ml={12} $dim>
              <BigIcon>
                <svg width={33} height={33} viewBox="0 0 33 33">
                  <path d="M1 12c6-10 20-12 28-2-4 7-10 11-16 11S4 18 1 12z" fill="#f2f2f2" stroke="#d0d0d0" />
                  <circle cx="15" cy="10" r="7" fill="#c4c4c4" />
                  <rect x="17" y="13" width="15" height="19" fill="#fff" stroke="#c4c4c4" />
                  <path d="M20 18h2M24 18h6M20 23h2M24 23h6M20 28h2M24 28h6" stroke="#c4c4c4" />
                </svg>
              </BigIcon>
              <BigLabel>显示和隐藏</BigLabel>
            </Big>
            <Stack $ml={8} $w={90} $mt={-1}>
              <InRow $h={22} $gap={4}><DarkText>工作层</DarkText>
                <LayerSelect>1<Caret c="#222" /></LayerSelect>
              </InRow>
              <InRow $h={23} $gap={5}>
                <svg width={16} height={16} viewBox="0 0 16 16" fill="#e4e4e4" stroke="#c4c4c4"><path d="M1 4l5-3 5 3-5 3z" /><path d="M1 7l5 3 3-2M1 10l5 3" fill="none" /><rect x="8" y="8" width="7" height="7" fill="#fff" /></svg>
                <DimText>移动至图层</DimText>
              </InRow>
              <InRow $h={23} $gap={5}>
                <svg width={16} height={16} viewBox="0 0 16 16" fill="#e4e4e4" stroke="#c4c4c4"><path d="M1 4l5-3 5 3-5 3z" /><path d="M1 7l5 3 3-2M1 10l5 3" fill="none" /><circle cx="12" cy="12" r="3" fill="#fff" /></svg>
                <DimText>图层设置</DimText>
              </InRow>
            </Stack>
            <Big $w={48} $ml={3} $dim>
              <BigIcon>
                <svg width={33} height={33} viewBox="0 0 33 33">
                  <path d="M1 12l10-9 11 2 3 6v12l-8 4-16-3z" fill="#e8e8e8" stroke="#d0d0d0" />
                  <path d="M8 15c0-5 3-8 8-8v14H8z" fill="#fff" stroke="#ddd" />
                  <path d="M14 30l10-10c0-4 4-6 8-5l-3 3 2 3 3-2c0 4-3 7-7 6l-9 8z" fill="#f2f2f2" stroke="#bbb" />
                </svg>
              </BigIcon>
              <BigLabel>编辑截面</BigLabel>
            </Big>
            <Big $w={48} $ml={4}>
              <BigIcon>
                <svg width={33} height={33} viewBox="0 0 33 33">
                  <path d="M1 11l10-8 14 4-2 16-8 4-14-3z" fill="#bbb" stroke="#222" />
                  <path d="M1 11l12 3v14l-12-3z" fill="#e8e8e8" stroke="#222" />
                  <path d="M13 14c0-5 4-8 7-7v15h-7z" fill="#e07b12" />
                  <path d="M23 4h4v18h-4z" fill="#e07b12" />
                  <rect x="11" y="21" width="21" height="11" rx="5.500" fill="#18c418" stroke="#111" />
                  <circle cx="26.500" cy="26.500" r="4" fill="#ccc" stroke="#333" />
                </svg>
              </BigIcon>
              <BigLabel>剪切截面</BigLabel>
            </Big>
            <Big $w={72} $ml={3} $dim>
              <BigIcon>
                <svg width={30} height={33} viewBox="0 0 30 33">
                  <path d="M2 1l10 2 17 17-7 10L2 18z" fill="#ececec" stroke="#d4d4d4" />
                  <path d="M6 3l8 15M12 3l4 14 12 4" fill="none" stroke="#d8d8d8" />
                </svg>
              </BigIcon>
              <BigLabel>全部通透显示</BigLabel>
            </Big>
            <Big $w={38} $ml={10}>
              <MoreBox>
                <svg width={18} height={18} viewBox="0 0 18 18">
                  <path d="M1 6c3-5 12-5 15 0-3 5-12 5-15 0z" fill="#fff" stroke="#333" />
                  <circle cx="8" cy="5.500" r="3.300" fill="#333" />
                  <rect x="8" y="7" width="9" height="10.500" fill="#fff" stroke="#333" />
                  <path d="M10 10h1M12.500 10h3M10 13h1M12.500 13h3" stroke="#333" />
                </svg>
              </MoreBox>
              <BigLabel>更多</BigLabel>
              <BigCaret><Caret /></BigCaret>
            </Big>
            <RibbonDivider $ml={4} />
            <Big $w={40} $ml={8} $dim>
              <BigIcon>
                <svg width={33} height={33} viewBox="0 0 33 33">
                  <rect x=".5" y=".5" width="26" height="26" fill="#fff" stroke="#ccc" />
                  <path d="M1 4h26" stroke="#ccc" />
                  <path d="M13 7l9 4v10l-9 4-9-4V11z" fill="#e4e4e4" stroke="#c8c8c8" />
                  <g transform="translate(18 17)"><path d="M7.500 0v3M7.500 12v3M0 7.500h3M12 7.500h3M2 2l2 2M11 11l2 2M13 2l-2 2M4 11l-2 2" stroke="#c4c4c4" strokeWidth="2" /><circle cx="7.500" cy="7.500" r="4.300" fill="#fff" stroke="#c4c4c4" strokeWidth="1.600" /></g>
                </svg>
              </BigIcon>
              <BigLabel>首选项</BigLabel>
            </Big>
            <Big $w={70} $ml={3} $dim>
              <BigIcon>
                <svg width={33} height={33} viewBox="0 0 33 33">
                  <path d="M31 1L14 19l3 3z" fill="#e4e4e4" stroke="#ccc" />
                  <path d="M13 19c-6 1-5 7-12 11 8 1 15-1 16-8z" fill="#dcdcdc" stroke="#c8c8c8" />
                </svg>
              </BigIcon>
              <BigLabel>编辑对象显示</BigLabel>
            </Big>
            <Big $w={50} $ml={3} $dim>
              <BigIcon>
                <svg width={32} height={33} viewBox="0 0 32 33">
                  <rect x=".5" y=".5" width="25" height="25" fill="#ececec" stroke="#ddd" />
                  <circle cx="19" cy="7" r="3" fill="#fff" />
                  <path d="M1 25l8-11 7 7 3-2 6 6z" fill="#d4d4d4" stroke="#fff" />
                  <rect x="15" y="15" width="11" height="17" fill="#fff" stroke="#bbb" />
                  <path d="M20 19h5v-3l6 6-6 6v-3h-5z" fill="#fff" stroke="#bbb" />
                </svg>
              </BigIcon>
              <BigLabel>导出图像</BigLabel>
            </Big>
            <Stack $ml={7} $w={118} $mt={-2}>
              <InRow $h={23} $gap={5}>
                <svg width={16} height={16} viewBox="0 0 16 16"><rect x=".5" y=".5" width="11" height="11" fill="#fff" stroke="#bbb" strokeDasharray="1.500 1" /><rect x="4" y="6" width="12" height="9" fill="#ccc" stroke="#aaa" /><circle cx="10" cy="10.500" r="2.500" fill="#fff" /></svg>
                <DimText>导出高分辨率图像</DimText>
              </InRow>
              <InRow $h={23} $gap={5}>
                <svg width={16} height={16} viewBox="0 0 16 16"><rect x=".5" y=".5" width="15" height="15" fill="#fff" stroke="#c0c0c0" /><path d="M.5 3h15" stroke="#c0c0c0" /><circle cx="8" cy="9.500" r="3.300" fill="none" stroke="#bbb" strokeWidth="2" /></svg>
                <DimText>编辑背景</DimText>
              </InRow>
              <InRow $h={23} $gap={5}><Cube c="#f0f0f0" /><DimText>面的边</DimText></InRow>
            </Stack>
            <Stack $w={84} $mt={-2}>
              <InRow $h={23} $gap={5}><Cube c="#cfcfcf" /><DimText>小平面边</DimText></InRow>
              <InRow $h={23} $gap={5}><Cube c="#e2e2e2" /><DimText>光顺边</DimText></InRow>
              <InRow $h={23} $gap={5}>
                <svg width={16} height={16} viewBox="0 0 16 16"><path d="M8 1l7 5-7 3-7-3z" fill="#ccc" stroke="#b8b8b8" /><path d="M3 7v7l5 2 5-2V7l-5 2z" fill="#e8e8e8" stroke="#b8b8b8" /></svg>
                <DimText>减小边渗漏</DimText>
              </InRow>
            </Stack>
          </GroupBody>
          <GroupLabel $end $pr={185}>可视化</GroupLabel>
          <GroupCaret><Caret /></GroupCaret>
        </Group>

        <Group $w={60} $bar>
          <GroupBody>
            <Big $w={59} $dim>
              <BigIcon>
                <svg width={32} height={32} viewBox="0 0 32 32">
                  <defs><radialGradient id="ball" cx=".4" cy=".3" r=".8"><stop offset="0" stopColor="#fff" /><stop offset=".55" stopColor="#dedede" /><stop offset="1" stopColor="#a8a8a8" /></radialGradient></defs>
                  <rect width="32" height="32" fill="#e6e6e6" />
                  <circle cx="16" cy="15" r="13" fill="url(#ball)" />
                  <path d="M6 13c6 3 14 3 20-1" stroke="#fff" strokeWidth="2" fill="none" />
                </svg>
              </BigIcon>
              <BigLabel>真实着色</BigLabel>
            </Big>
          </GroupBody>
        </Group>

        <Group>
          <GroupBody />
          <GroupCaret><Caret /></GroupCaret>
        </Group>
      </Ribbon>

      <Toolbar>
        <Slot $w={10} $ml={13}>
          <svg width={10} height={10} viewBox="0 0 10 10"><path d="M0 1h10M0 5h10M0 9h10" stroke="#333" /></svg>
        </Slot>
        <Slot $ml={7}><DarkText>菜单(<u>M</u>)</DarkText></Slot>
        <Slot $w={8} $ml={6}><Caret /></Slot>
        <VSep $ml={7} />
        <VSep $ml={33} />
        <Slot $w={16} $ml={12}>
          <svg width={16} height={16} viewBox="0 0 16 16" fill="none" stroke="#aaa"><path d="M1 2h3v3M6 1v4h3M12 2v3M12 7v7h2M12 10h2" /><path d="M4 5l2 3" /></svg>
        </Slot>
        <Slot $w={16} $ml={8}>
          <svg width={16} height={16} viewBox="0 0 16 16"><path d="M1 3l4-2 4 2v4l-4 2-4-2z" fill="#ccc" stroke="#aaa" /><path d="M11 8v6h3M11 11h3" stroke="#aaa" fill="none" /></svg>
        </Slot>
        <VSep $ml={12} />
        <SelectBox $w={149} $ml={12}><Caret c="#aaa" /></SelectBox>
        <FilterBox $ml={8}>仅在工作部件内</FilterBox>
        <ToolRight>
          <Slot $w={8} $ml={1}><Caret /></Slot>
          <ToggleBtn $ml={6}>
            <svg width={21} height={20} viewBox="0 0 21 20">
              <text x="3" y="6" fontSize="6.500" fontWeight="700" fontFamily="Liberation Sans" fill="#222">MCS</text>
              <path d="M2 1v16" stroke="#d33" /><path d="M2 17l14-10" stroke="#3a3" />
              <path d="M3 14c4-5 12-5 16 0-4 5-12 5-16 0z" fill="#fff" stroke="#222" />
              <circle cx="11" cy="14" r="3" fill="#222" />
            </svg>
          </ToggleBtn>
          <ToggleBtn $ml={1}>
            <svg width={21} height={20} viewBox="0 0 21 20">
              <path d="M2 3v14" stroke="#d33" /><path d="M2 15l14-9" stroke="#3a3" />
              <path d="M3 13c4-5 12-5 16 0-4 5-12 5-16 0z" fill="#fff" stroke="#222" />
              <circle cx="11" cy="13" r="3" fill="#222" />
            </svg>
          </ToggleBtn>
          <Slot $w={17} $ml={6}>
            <svg width={17} height={18} viewBox="0 0 17 18"><path d="M1 6c3-5 11-5 14 0-3 5-11 5-14 0z" fill="#fff" stroke="#bbb" /><circle cx="7" cy="5.500" r="3" fill="#bbb" /><rect x="8" y="7" width="8" height="10" fill="#fff" stroke="#aaa" /><path d="M10 10h1M12 10h3M10 13h1M12 13h3" stroke="#aaa" /></svg>
          </Slot>
          <Slot $w={8} $ml={6}><Caret /></Slot>
          <Slot $w={17} $ml={6}>
            <svg width={17} height={17} viewBox="0 0 17 17" fill="none" stroke="#bbb"><path d="M1 9c4-6 11-6 15 0-4 6-11 6-15 0z" /><circle cx="8.500" cy="8.500" r="2.500" fill="#bbb" /><path d="M2 2l13 13" strokeWidth="1.400" /><path d="M15 2L2 15" /></svg>
          </Slot>
          <VSep $ml={9} $h={22} />
          <Slot $w={8} $ml={182}><Caret /></Slot>
        </ToolRight>
      </Toolbar>

      <Main>
        <Rail>
          <RailItem $h={26}><Gear s={15} c="#444" /></RailItem>
          <RailItem $h={15} />
          <RailItem $h={44}>
            <svg width={18} height={22} viewBox="0 0 18 22"><path d="M1 6l7-4 4 2v5l5 3v5l-7 4-6-3-3-2z" fill="#d4d4d4" stroke="#555" /><path d="M1 6l6 3v12" fill="none" stroke="#555" /><path d="M7 9l5-3v6l5 0-10 9z" fill="#a4a4a4" /><path d="M1 6l6 3 5-3-4-3z" fill="#eee" stroke="#555" strokeWidth=".6" /></svg>
          </RailItem>
          <RailItem $h={44}>
            <svg width={24} height={24} viewBox="0 0 24 24"><path d="M1 5l8-4 7 3v8l-8 4-7-3z" fill="#f0871f" stroke="#c46a10" /><path d="M1 12l7 3v7l-7-3z" fill="#ccc" stroke="#555" /><path d="M8 15l8-3v9l-8 1z" fill="#aaa" stroke="#555" /><path d="M9 1l7 3v8l-4 1.500V5L6 2.500z" fill="#ccc" stroke="#555" strokeWidth=".6" /><path d="M12 10l11 12V10L12 22z" fill="#fff" stroke="#222" /></svg>
          </RailItem>
          <RailItem $h={38}>
            <svg width={24} height={22} viewBox="0 0 24 22"><path d="M1 16c0-5 4-6 6-10 1-3 4-5 6-5l1 6c3 1 9 4 9 8 0 3-6 6-11 6S1 19 1 16z" fill="#b0b0b0" stroke="#555" /><path d="M7 6c1-3 4-5 6-5l1 6-4 2z" fill="#ddd" /><ellipse cx="14" cy="14" rx="3" ry="1.600" fill="#fff" stroke="#555" /></svg>
          </RailItem>
          <RailItem $h={46} $active>
            <svg width={21} height={24} viewBox="0 0 21 24" fill="none">
              <path d="M2 1v13" stroke="#1c6fd0" strokeWidth="3" strokeDasharray="1 1" />
              <path d="M5 4h7M5 7h5M5 10h3" stroke="#1c6fd0" /><path d="M5 11h15" stroke="#222" />
              <path d="M4 12v11M4 17h4" stroke="#1c2fb8" /><path d="M11 14v6h7l-3-4h-2z" stroke="#1c2fb8" />
            </svg>
          </RailItem>
          <RailItem $h={38}>
            <svg width={25} height={25} viewBox="0 0 25 25"><path d="M1 7l16-5v12L1 20z" fill="#f4d8a4" stroke="#c99" /><path d="M1 12l16-5M5 6v13M9 5v13M13 3v13" stroke="#b56bb5" /><path d="M10 15l7-3 7 2v7l-8 3-6-2z" fill="#f0871f" /><path d="M16 18l8-3v6l-8 3z" fill="#2a6fc0" /></svg>
          </RailItem>
          <RailItem $h={46}>
            <svg width={24} height={24} viewBox="0 0 24 24"><path d="M1 9l14-3v14H1z" fill="#ddd" stroke="#666" /><path d="M5 10v10M10 9v11" stroke="#666" strokeWidth="2" /><path d="M14 4l4-2 4 2v4l-4 2-4-2z" fill="#f0871f" /><path d="M18 4l2-1v3z" fill="#d33" /><path d="M15 21c3 0 7-4 7-9" fill="none" stroke="#555" strokeWidth="2" /></svg>
          </RailItem>
          <RailItem $h={38}>
            <svg width={17} height={20} viewBox="0 0 17 20"><path d="M1 5l7-4 8 3v12l-7 3-8-3z" fill="#eee" stroke="#555" /><path d="M1 5l8 3 7-4M9 8v11M5 3l8 3" fill="none" stroke="#555" /></svg>
          </RailItem>
          <RailItem $h={74}>
            <svg width={24} height={24} viewBox="0 0 24 24">
              <path d="M14 3c4 1 7 4 8 8M14 0c6 1 9 5 10 10M13 6c3 0 5 2 6 5" fill="none" stroke="#aaa" />
              <circle cx="9" cy="15" r="8" fill="#888" stroke="#555" />
              <path d="M9 12v7M9 9v1.500" stroke="#fff" strokeWidth="1.500" />
            </svg>
          </RailItem>
          <RailItem $h={29}>
            <Win s={24} c="#333"><circle cx="16" cy="18" r="10" fill="#2c88ac" /><path d="M10 13c3 1 4 4 2 6M18 11c2 3 5 3 7 3M18 22c2-2 5-2 6 0" stroke="#e4f2f7" strokeWidth="1.200" fill="none" /></Win>
          </RailItem>
          <RailItem $h={24} $end>
            <svg width={28} height={8} viewBox="0 0 28 8"><path d="M1 2c4 3 8 5 14 2 4-2 7-3 12-1" fill="none" stroke="#777" strokeWidth="1.200" /></svg>
          </RailItem>
          <RailItem $h={16}><svg width={7} height={7} viewBox="0 0 7 7"><path d="M0 1h7" stroke="#aaa" /><path d="M0 7h7L3.500 3z" fill="#aaa" /></svg></RailItem>
          <RailItem $h={16}><UpArrow c="#aaa" /></RailItem>
          <RailItem $h={16}><Caret c="#222" /></RailItem>
          <RailItem $h={16}><svg width={7} height={7} viewBox="0 0 7 7"><path d="M0 0h7L3.500 4z" fill="#222" /><path d="M0 6.500h7" stroke="#222" /></svg></RailItem>
        </Rail>

        <NavPane>
          <NavTitle>工序导航器 - 几何</NavTitle>
          <TableWrap>
            <TableHead>
              <HeadCell>名称</HeadCell><HeadCell>刀...</HeadCell><HeadCell>刀具</HeadCell><HeadCell>刀.</HeadCell><HeadCell>时间</HeadCell><HeadCell>余量</HeadCell><HeadCell>底面余量</HeadCell>
            </TableHead>
            <RowsArea>
              {allRows.map((r, i) => <Row1 key={i} r={r} i={i} />)}
              <Guide $x={9} $y={29} $h={26} />
              <Guide $x={9} $y={29} $w={10} />
              <Guide $x={15} $y={49} $w={4} />
              <Guide $x={28} $y={60} $h={8} />
              <Guide $x={34} $y={69} $w={5} />
              <Guide $x={47} $y={80} $h={150} />
              {[89, 109, 129, 149, 169, 189, 209, 229].map(y => <Guide key={y} $x={47} $y={y} $w={10} />)}
            </RowsArea>
            <HScroll>
              <svg width={5} height={8} viewBox="0 0 5 8"><path d="M5 0v8L0 4z" fill="#555" /></svg>
              <HThumb>|||</HThumb>
            </HScroll>
          </TableWrap>
          <HSash />
        </NavPane>

        <Sash />
        <ViewCol>
          <ViewTop />
          <Viewport><Sphere /></Viewport>
        </ViewCol>
      </Main>

      <StatusBar>
        <svg width={16} height={16} viewBox="0 0 16 16" fill="none" stroke="#333"><path d="M.5 5V.5H5M11 .5h4.500V5M15.500 11v4.500H11M5 15.500H.5V11" /></svg>
      </StatusBar>

      <Taskbar>
        <Slot $w={38} $ml={8}>
          <svg width={38} height={38} viewBox="0 0 38 38">
            <defs><radialGradient id="orb" cx=".5" cy=".4" r=".65"><stop offset="0" stopColor="#5cc0e8" /><stop offset="1" stopColor="#0b3f72" /></radialGradient></defs>
            <circle cx="19" cy="19" r="18" fill="url(#orb)" stroke="#0c3554" />
            <path d="M11 12c3-1 5-1 7 0l-1 6c-2-1-4-1-7 0z" fill="#e9522c" />
            <path d="M19.500 12.500c3 1.500 5 1 7 0l-1 6c-2 1-4 1.500-7 0z" fill="#7ab92e" />
            <path d="M10 19.500c3-1 5-1 7 0l-1 6c-2-1-4-1-7 0z" fill="#2d9be0" />
            <path d="M18.500 20c3 1.500 5 1 7 0l-1 6c-2 1-4 1.500-7 0z" fill="#f4b81c" />
          </svg>
        </Slot>
        <TaskBtn $first>
          <svg width={30} height={32} viewBox="0 0 30 32">
            <circle cx="15" cy="16" r="12" fill="#60c020" />
            <path d="M8 15h14c0-9-14-9-14 0zm0 3c1 8 10 9 14 4" fill="#fff" />
            <path d="M9 15.500h13v2H9z" fill="#60c020" />
            <path d="M27 3C17 1 4 14 3 29" fill="none" stroke="#38a010" strokeWidth="2" />
          </svg>
        </TaskBtn>
        <TaskBtn $lit>
          <svg width={32} height={32} viewBox="0 0 32 32">
            <circle cx="15" cy="18" r="11" fill="#1f86d8" />
            <path d="M15 7c4 2 6 6 6 11s-2 8-6 11c-3-1-6-4-7-8z" fill="#3a9e4a" opacity=".75" />
            <path d="M3 29c8 1 20-3 27-15 1-3 0-6-3-7 1 6-6 14-20 18z" fill="#e8941c" />
            <path d="M5 1l11 3-4 11z" fill="#c8203c" />
          </svg>
        </TaskBtn>
        <TaskBtn>
          <svg width={32} height={32} viewBox="0 0 32 32">
            <rect width="32" height="32" fill="#d81f26" />
            <path d="M16 5v22M5 16h22M8 8l16 16M24 8L8 24" stroke="#fff" strokeWidth="2.400" strokeDasharray="4 2" />
            <circle cx="16" cy="16" r="2.200" fill="#d81f26" />
          </svg>
        </TaskBtn>
        <Tray>
          <svg width={16} height={11} viewBox="0 0 16 11"><rect x=".5" y=".5" width="15" height="10" rx="1" fill="#c4d0dc" stroke="#555" /><path d="M2 3h12M2 5.500h12M4 8h8" stroke="#667" strokeDasharray="1 1" /></svg>
          <Slot $ml={17}><svg width={9} height={6} viewBox="0 0 9 6"><path d="M0 6h9L4.500 0z" fill="#f4f4f4" /></svg></Slot>
          <Slot $ml={12}>
            <svg width={17} height={17} viewBox="0 0 17 17"><circle cx="8.500" cy="8.500" r="8" fill="#f2d20a" stroke="#1b8a1b" strokeWidth="1.600" /><path d="M8.500 4v9M4 8.500h9" stroke="#0a6a0a" strokeWidth="2.600" /></svg>
          </Slot>
          <Slot $ml={8}>
            <svg width={16} height={16} viewBox="0 0 16 16" fill="none" stroke="#eef"><path d="M1 6h3l4-4v12l-4-4H1z" fill="#d8e0e8" stroke="#556" /><path d="M10 5c2 2 2 4 0 6M12 3c3 3 3 7 0 10" strokeWidth="1.300" /></svg>
          </Slot>
          <Slot $ml={9}>
            <svg width={15} height={15} viewBox="0 0 15 15"><circle cx="7.500" cy="7.500" r="6.800" fill="#58c028" /><path d="M3 7h9c0-6-9-6-9 0zm0 2c1 4 6 4.500 8 2" fill="#fff" /></svg>
          </Slot>
          <Slot $ml={9}>
            <svg width={16} height={16} viewBox="0 0 16 16"><path d="M2 1v15" stroke="#f2f2f2" strokeWidth="1.500" /><path d="M3 1.500l6 1 6 3-6 2-6-1z" fill="#f0f2f4" stroke="#445" strokeWidth=".5" /></svg>
          </Slot>
          <Slot $ml={8}>
            <svg width={16} height={13} viewBox="0 0 16 13"><path d="M1 10h2v3H1zM4 8h2v5H4zM7 6h2v7H7zM10 3h2v10h-2zM13 0h2v13h-2z" fill="#fff" stroke="#556" strokeWidth=".4" /></svg>
          </Slot>
        </Tray>
        <Clock>18:17<br />2020/9/3</Clock>
        <ShowDesk />
      </Taskbar>

      <Dialog>
        <DlgTitle>
          <Slot $w={15} $ml={8}><WhiteGear /></Slot>
          <Slot $ml={6}>可视化首选项</Slot>
          <Slot $w={14} $ml={426}>
            <svg width={14} height={14} viewBox="0 0 14 14" fill="none"><path d="M5.200 2.300A5.700 5.700 0 111.900 6.500" stroke="#fff" strokeWidth="1.700" /><path d="M7 0v5L3 2.500z" fill="#fff" /></svg>
          </Slot>
          <Slot $w={12} $ml={4}><svg width={10} height={14} viewBox="0 0 10 14" fill="none"><path d="M1 4.500C1 .5 9 .5 9 4.500 9 7 5 7 5 10" stroke="#fff" strokeWidth="2.200" /><circle cx="5" cy="12.800" r="1.300" fill="#fff" /></svg></Slot>
          <Slot $w={12} $ml={12}><svg width={12} height={12} viewBox="0 0 12 12"><path d="M.8 .8l10.400 10.400M11.200 .8L.8 11.200" stroke="#fff" strokeWidth="2" /></svg></Slot>
        </DlgTitle>
        <DlgSearch>
          <Slot $w={24} $ml={9}><Bino /></Slot>
          <Slot $ml={3}><DarkText>查找</DarkText></Slot>
          <DlgInput />
        </DlgSearch>
        <DlgBody>
          <TreePanel>
            {tree.map((n, i) => (
              <TreeRow key={i} $alt={i % 2 === 1}>
                <TreeText $pl={n.l === 0 ? 22 : 41} $sel={n.sel}>{n.t}</TreeText>
              </TreeRow>
            ))}
            <Guide $x={10} $y={15} $h={436} />
            <Guide $x={29} $y={20} $h={52} />
            <Guide $x={29} $y={100} $h={52} />
            <Guide $x={29} $y={180} $h={32} />
            <Guide $x={29} $y={240} $h={52} />
            <Guide $x={29} $y={340} $h={52} />
            {[ [10, 12, 6], [29, 31, 12], [29, 51, 12], [29, 71, 12], [10, 92, 6], [35, 111, 6], [29, 131, 12], [29, 151, 12], [10, 172, 6], [29, 191, 12], [29, 211, 12], [10, 232, 6], [29, 251, 12], [29, 271, 12], [29, 291, 12], [10, 311, 10], [10, 332, 6], [29, 351, 12], [29, 371, 12], [29, 391, 12], [10, 411, 10], [10, 431, 10], [10, 451, 10] ].map(([x, y, w]) => <Guide key={`${x}-${y}`} $x={x} $y={y} $w={w} />)}
            {[12, 92, 172, 232, 332].map(y => <TreeExp key={y} $x={6} $y={y - 4}>−</TreeExp>)}
            <TreeExp $x={25} $y={107}>+</TreeExp>
          </TreePanel>
          <RightPanel>
            <RightScrollArea>
              <Section $h={134}>
                <SecHead>线型<Chevron /></SecHead>
                <CheckRow><CheckBox><TickBlue /></CheckBox>软件样式</CheckRow>
                <FieldRow>虚线段长度<NumBox>1.00000</NumBox></FieldRow>
                <FieldRow>空格大小<NumBox>1.00000</NumBox></FieldRow>
                <FieldRow>符号大小<NumBox>1.00000</NumBox></FieldRow>
              </Section>
              <Section>
                <SecHead>线宽<Chevron /></SecHead>
                <CheckRow><CheckBox><TickBlue /></CheckBox>显示线宽</CheckRow>
                <SubGroup>
                  <SubHead>像素宽度<Chevron /></SubHead>
                  <SubInner>
                    {widths.map(([l, v]) => (
                      <FieldRow key={l} $pl={8}>
                        {l}
                        <SpinBox>{v}<SpinArrows><UpArrow c="#222" /><Caret c="#222" /></SpinArrows></SpinBox>
                      </FieldRow>
                    ))}
                  </SubInner>
                  <SubNext />
                </SubGroup>
              </Section>
            </RightScrollArea>
            <VScroll>
              <VBtn $lit><UpArrow c="#222" /></VBtn>
              <VThumb><svg width={8} height={7} viewBox="0 0 8 7"><path d="M0 .5h8M0 3.500h8M0 6.500h8" stroke="#777" /></svg></VThumb>
              <VGap />
              <VBtn><Caret c="#777" /></VBtn>
            </VScroll>
          </RightPanel>
        </DlgBody>
        <DlgFooter>
          <DlgBtn $primary>确定</DlgBtn>
          <DlgBtn>应用</DlgBtn>
          <DlgBtn>取消</DlgBtn>
        </DlgFooter>
      </Dialog>

      <Mark>
        <svg width={72} height={83} viewBox="0 0 72 83">
          <path d="M36 0l36 18v44L36 83 0 62V18z" fill="#3c9ad0" opacity=".62" />
          <path d="M36 0l36 18-36 16L0 18z" fill="#a8c4d2" opacity=".6" />
          <path d="M36 20l22 12v25L36 69 14 57V32z" fill="none" stroke="#fff" strokeWidth="3" opacity=".7" />
          <path d="M18 35l18 9 18-9v20L36 66 18 55z" fill="#9ed4f4" opacity=".75" />
          <path d="M18 35l18 9 18-9M36 44v22" fill="none" stroke="#fff" strokeWidth="2" opacity=".9" />
        </svg>
      </Mark>
      <MarkTitle>3D世界网</MarkTitle>
      <MarkUrl>WWW.3DSJW.COM</MarkUrl>

      <Sketch width={1366} height={768} viewBox="0 0 1366 768" fill="none" stroke="#000" strokeWidth="1">
        {sketchPaths.map((d, i) => <path key={i} d={d} />)}
      </Sketch>
    </Page>
  );
}
